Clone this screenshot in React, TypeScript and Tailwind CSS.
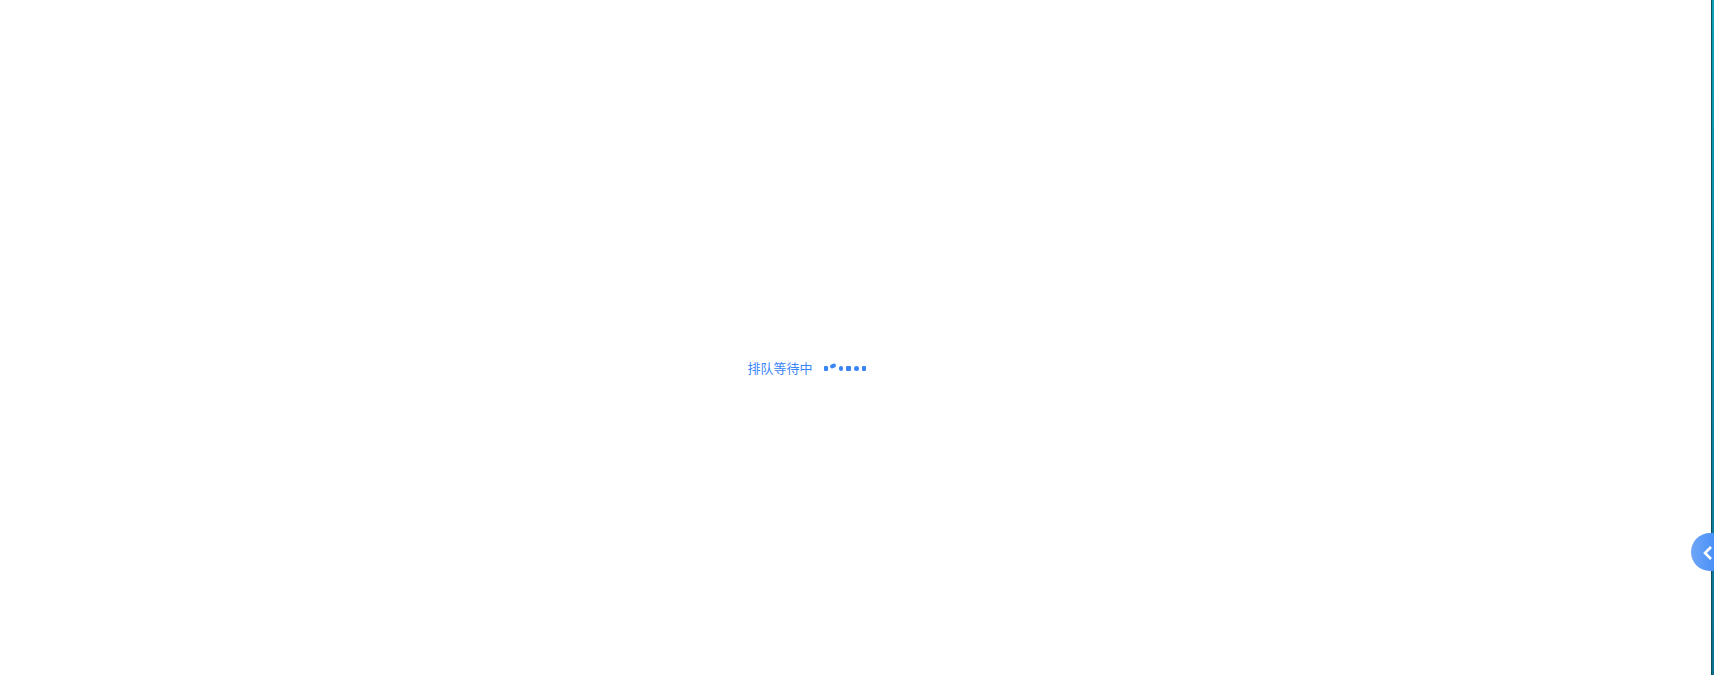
export default function App() {
  const dots = [
    "rounded-[1px]",
    "!h-[4px] !w-[6px] -ml-[1px] -mr-[1px] rounded-full -translate-y-[3px] -rotate-[20deg]",
    "rounded-full",
    "rounded-[1px]",
    "rounded-full",
    "rounded-[1px]",
  ];

  return (
    <div className="relative flex h-[675px] w-full overflow-hidden bg-white font-['Liberation_Sans','Noto_Sans_CJK_SC',sans-serif]">
      <main className="flex flex-1 items-center justify-center pt-[62px]">
        <div className="flex items-center gap-[11px] pr-[97px] text-[13px] text-[#3b86f7]">
          <span>排队等待中</span>
          <div className="flex items-center gap-[3.25px]">
            {dots.map((d, i) => (
              <span key={i} className={`h-[4.5px] w-[4.5px] bg-[#3b86f7] ${d}`} />
            ))}
          </div>
        </div>
      </main>
      <div className="w-[3px] border-l border-[#0d4f5f] bg-gradient-to-b from-[#0f9fb5] via-[#0f8aa5] to-[#0f6f90]" />
      <button className="absolute right-0 top-[533px] flex h-[38px] w-[23px] items-center justify-end rounded-l-full bg-gradient-to-r from-[#6ea6f8] to-[#4a90f7] pr-[1px] text-white">
        <svg className="mt-[2px]" width="10" height="16" viewBox="0 0 10 16" fill="none" stroke="currentColor" strokeWidth="2.6">
          <path d="M8 2 2 8l6 6" />
        </svg>
      </button>
    </div>
  );
}
